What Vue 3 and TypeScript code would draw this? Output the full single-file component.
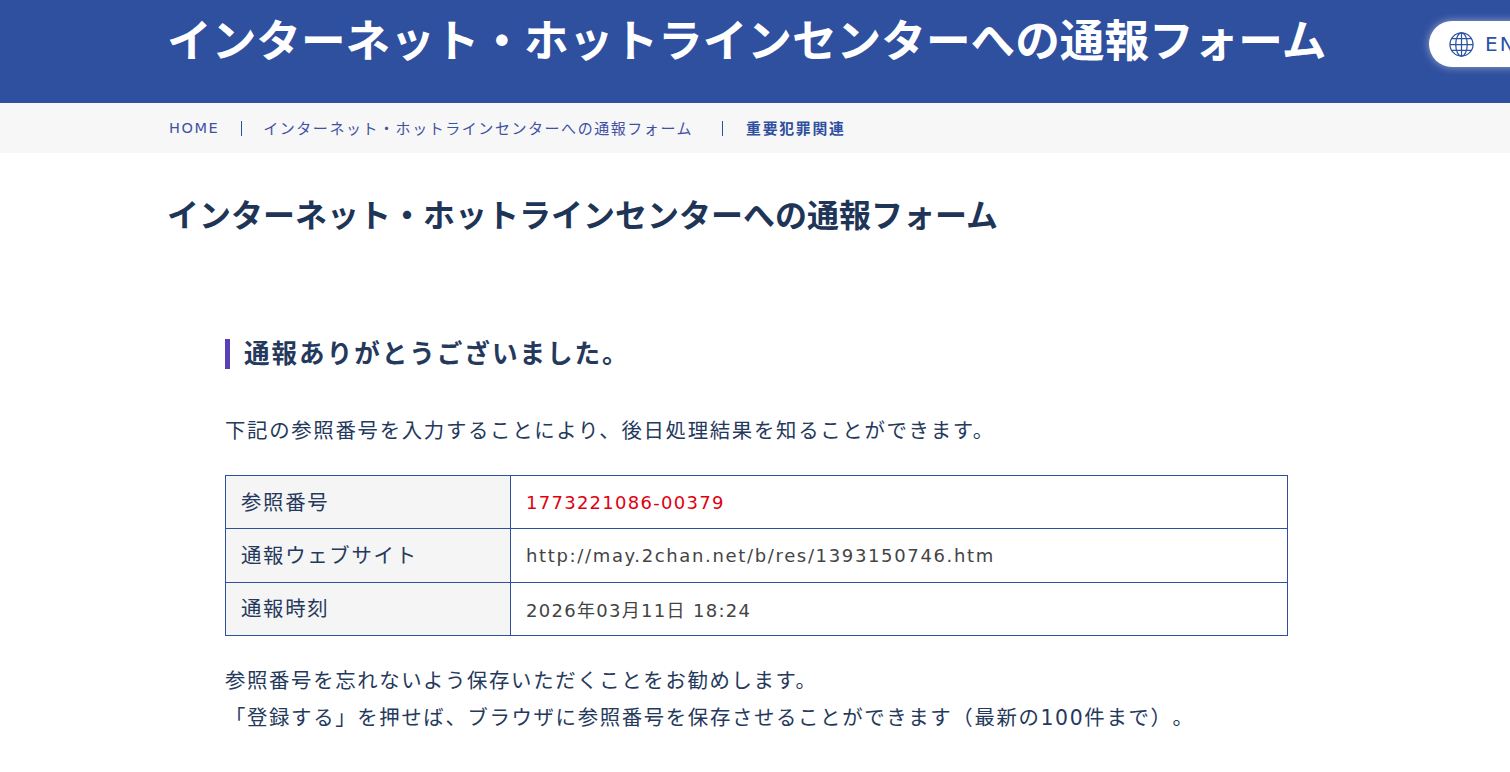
<script setup lang="ts">
const rows = [
  { label: '参照番号', value: '1773221086-00379', kind: 'red' },
  { label: '通報ウェブサイト', value: 'http://may.2chan.net/b/res/1393150746.htm', kind: 'url' },
  { label: '通報時刻', value: '2026年03月11日 18:24', kind: 'date' },
]
</script>

<template>
  <div class="page">
    <header class="top">
      <div class="wrap top-inner">
        <div class="site">インターネット・ホットラインセンターへの通報フォーム</div>
      </div>
      <div class="lang">
        <svg width="25" height="25" viewBox="0 0 26 26" fill="none" stroke="#2b52a5" stroke-width="1.3">
          <circle cx="13" cy="13" r="12" />
          <ellipse cx="13" cy="13" rx="6" ry="12" />
          <path d="M13 1v24M1 13h24M2.8 7h20.4M2.8 19h20.4" />
        </svg>
        <span>EN</span>
      </div>
    </header>
    <nav class="crumbs">
      <div class="wrap crumb-row">
        <a class="home">HOME</a><i class="sep first"></i>
        <a>インターネット・ホットラインセンターへの通報フォーム</a><i class="sep second"></i>
        <b>重要犯罪関連</b>
      </div>
    </nav>
    <main class="wrap">
      <h1>インターネット・ホットラインセンターへの通報フォーム</h1>
      <section class="body">
        <h2>通報ありがとうございました。</h2>
        <p class="lead">下記の参照番号を入力することにより、後日処理結果を知ることができます。</p>
        <table>
          <tbody>
            <tr v-for="r in rows" :key="r.label">
              <th>{{ r.label }}</th>
              <td :class="r.kind">{{ r.value }}</td>
            </tr>
          </tbody>
        </table>
        <p class="note">参照番号を忘れないよう保存いただくことをお勧めします。<br />「登録する」を押せば、ブラウザに参照番号を保存させることができます（最新の100件まで）。</p>
      </section>
    </main>
  </div>
</template>

<style>
html, body { margin: 0; background: #fff; overflow: hidden; }
</style>

<style scoped>
.page { height: 772px; overflow: hidden; font-family: "DejaVu Sans", "Noto Sans CJK JP", sans-serif; color: #25395c; text-spacing-trim: space-all; }
.wrap { width: 1172px; margin-left: 169px; }
.top { height: 103px; background: #2f4f9f; position: relative; }
.top-inner { height: 85px; display: flex; align-items: center; }
.site { margin-left: -2px; font-size: 44.65px; font-weight: 700; color: #fff; white-space: nowrap; line-height: 1; }
.lang { position: absolute; left: 1429px; top: 21px; width: 120px; height: 46px; border-radius: 23px; background: #fff; display: flex; align-items: center; gap: 11px; padding-left: 20px; box-sizing: border-box; color: #2b52a5; font-size: 20px; letter-spacing: 2px; box-shadow: 0 0 8px rgba(255,255,255,.5); }
.crumbs { height: 50px; background: #f7f7f7; }
.crumb-row { height: 48px; padding-bottom: 2px; display: flex; align-items: center; font-size: 15px; letter-spacing: 1.55px; color: #3f51a5; white-space: nowrap; }
.crumb-row .home { font-size: 14.5px; padding-top: 2px; }
.sep { display: block; width: 1px; height: 15px; background: #2f4f9f; }
.sep.first { margin: 2px 21px 0 22px; }
.sep.second { margin: 2px 23px 0 29px; }
.crumb-row b { color: #2f4f9f; font-size: 14.8px; letter-spacing: 1.8px; }
h1 { margin: 42px 0 0 -2px; font-size: 32px; line-height: 42px; font-weight: 700; white-space: nowrap; color: #1f3558; }
.body { margin: 102px 0 0 56px; width: 1063px; }
h2 { margin: 0; border-left: 5px solid #5b3fb5; padding-left: 14px; font-size: 25.6px; letter-spacing: 1.95px; line-height: 30px; font-weight: 700; }
.lead { margin: 44px 0 0; font-size: 20.4px; letter-spacing: 1.7px; line-height: 36px; }
table { margin-top: 26px; width: 1063px; border-collapse: collapse; table-layout: fixed; }
tr { height: 53.3px; }
th, td { border: 1px solid #2f4f9f; padding: 0 15px; text-align: left; font-weight: 400; box-sizing: border-box; }
th { width: 285px; background: #f5f5f5; font-size: 20.4px; letter-spacing: 1.7px; padding-bottom: 3px; }
td { font-size: 18px; color: #444; }
td.red { color: #e00010; letter-spacing: 1.27px; }
td.url { letter-spacing: 1.65px; }
td.date { letter-spacing: 1.3px; }
.note { margin: 27px 0 0; font-size: 20.4px; letter-spacing: 1.65px; line-height: 37px; white-space: nowrap; }
</style>
